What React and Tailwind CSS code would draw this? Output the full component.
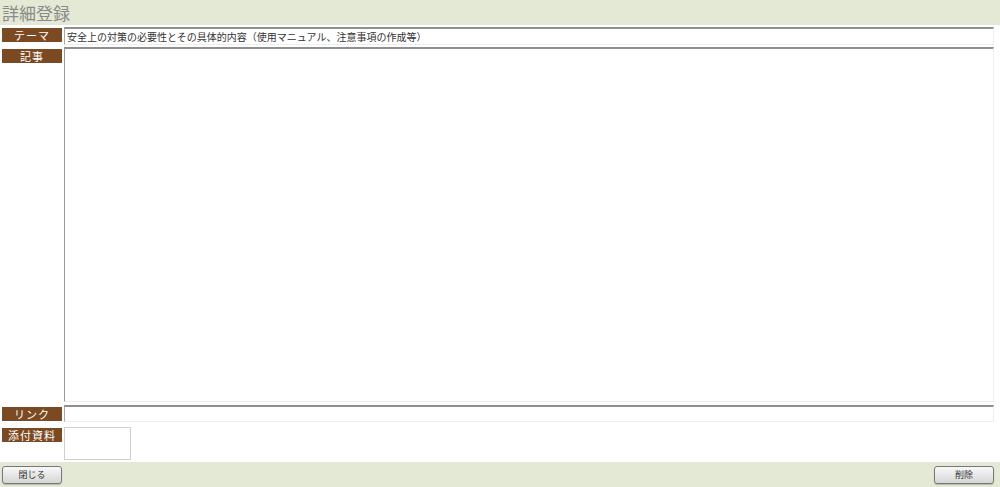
import React from "react";

const font = { fontFamily: '"Noto Sans CJK JP", "Noto Sans", sans-serif' };

function Label({ children }) {
  return (
    <div className="w-[60px] h-[14px] shrink-0 bg-[#7b4a22] text-white text-[11px] leading-[14px] text-center tracking-[1px]">
      {children}
    </div>
  );
}

export default function App() {
  return (
    <div className="w-[1000px] h-[487px] bg-white flex flex-col text-[#333]" style={font}>
      <div className="h-[25px] bg-[#e3e9d4] pl-[2px] flex items-center">
        <h1 className="text-[17px] leading-[22px] text-[#8a8a8a]">詳細登録</h1>
      </div>

      <div className="flex gap-[2px] pl-[2px] pr-[6px] mt-[2px]">
        <div className="pt-[1px]">
          <Label>テーマ</Label>
        </div>
        <input
          readOnly
          value="安全上の対策の必要性とその具体的内容（使用マニュアル、注意事項の作成等）"
          className="flex-1 h-[18px] px-[2px] text-[10px] text-[#333] border-t-2 border-l border-t-[#8f8f8f] border-l-[#aaa] border-b border-r border-b-[#eee] border-r-[#eee] outline-none"
        />
      </div>

      <div className="flex gap-[2px] pl-[2px] pr-[6px] mt-[2px]">
        <div className="pt-[2px]">
          <Label>記事</Label>
        </div>
        <textarea
          readOnly
          className="flex-1 h-[355px] resize-none border-t-2 border-l border-t-[#8f8f8f] border-l-[#999] border-b border-r border-b-[#eee] border-r-[#eee] outline-none"
        />
      </div>

      <div className="flex gap-[2px] pl-[2px] pr-[6px] mt-[3px]">
        <div className="pt-[2px]">
          <Label>リンク</Label>
        </div>
        <input
          readOnly
          className="flex-1 h-[17px] border-t-2 border-l border-t-[#8f8f8f] border-l-[#aaa] border-b border-r border-b-[#eee] border-r-[#eee] outline-none"
        />
      </div>

      <div className="flex gap-[2px] pl-[2px] mt-[5px]">
        <div className="pt-[1px]">
          <Label>添付資料</Label>
        </div>
        <div className="w-[67px] h-[33px] border border-[#cfcfcf]" />
      </div>

      <div className="mt-auto h-[25px] bg-[#e3e9d4] flex items-center justify-between pl-[2px] pr-[6px]">
        <button className="w-[60px] h-[18px] rounded-[3px] border border-[#777] bg-gradient-to-b from-[#f8f8f8] to-[#d6d6d6] text-[9px] leading-[16px] text-[#333] shadow-[0_1px_1px_rgba(0,0,0,0.2)]">
          閉じる
        </button>
        <button className="w-[60px] h-[18px] rounded-[3px] border border-[#777] bg-gradient-to-b from-[#f8f8f8] to-[#d6d6d6] text-[9px] leading-[16px] text-[#333] shadow-[0_1px_1px_rgba(0,0,0,0.2)]">
          削除
        </button>
      </div>
    </div>
  );
}
